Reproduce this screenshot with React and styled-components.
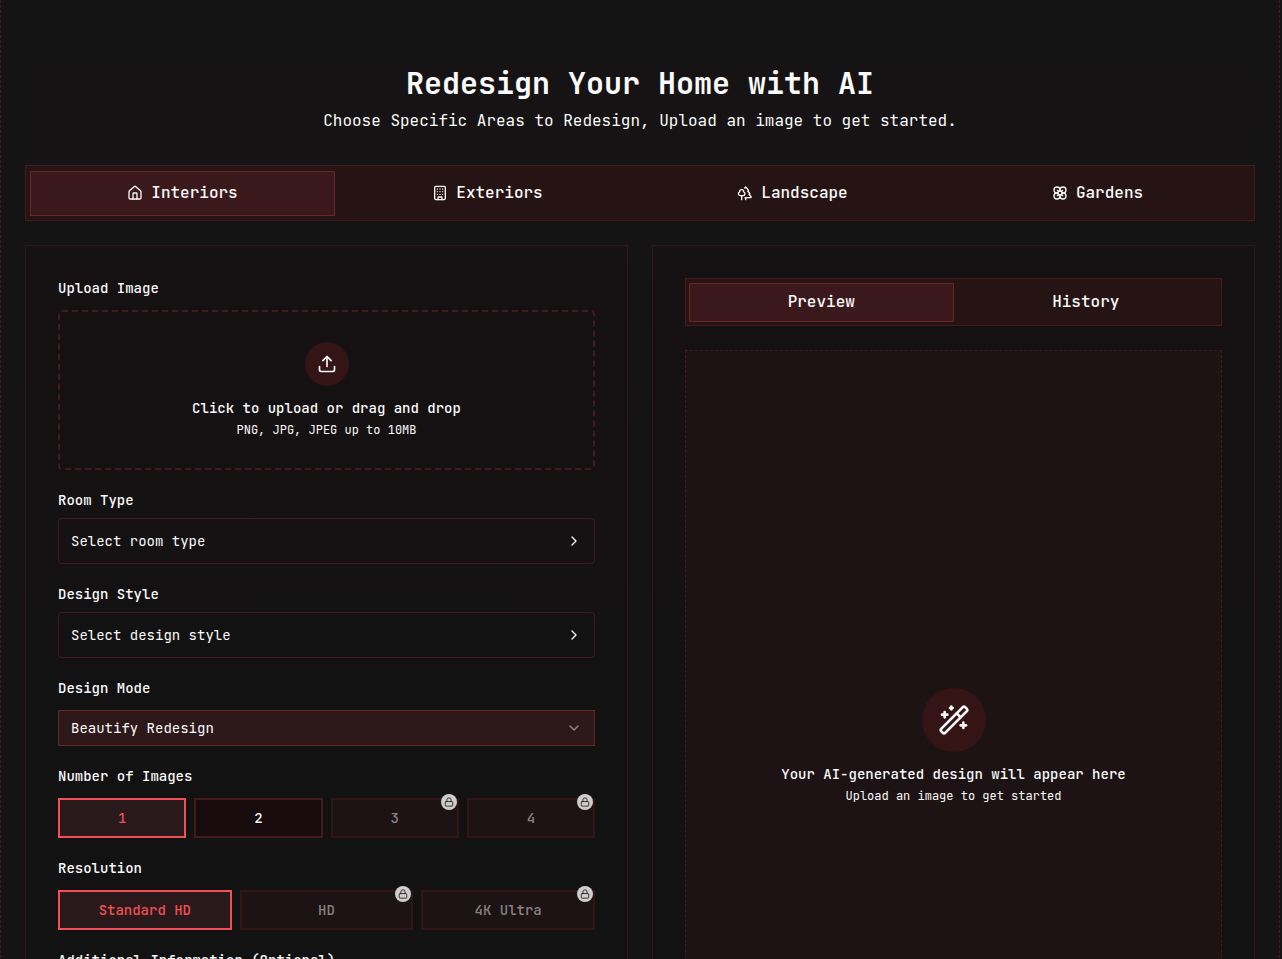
import React, { useState } from 'react';
import styled, { createGlobalStyle } from 'styled-components';
import {
  Building,
  ChevronDown,
  ChevronRight,
  Flower,
  House,
  Lock,
  Trees,
  Upload,
  WandSparkles,
} from 'lucide-react';

const GlobalStyle = createGlobalStyle`
  *, *::before, *::after {
    box-sizing: border-box;
  }

  body {
    margin: 0;
    background: #141414;
    color: #fafafa;
    font-family: 'JetBrains Mono', 'DejaVu Sans Mono', monospace;
    font-size: 14px;
    line-height: 20px;
    -webkit-font-smoothing: antialiased;
  }

  h1, p {
    margin: 0;
  }

  button, select, textarea {
    font: inherit;
    color: inherit;
    margin: 0;
  }

  button:not(:disabled), select {
    cursor: pointer;
  }
`;

const StyledPage = styled.main`
  min-height: 100vh;
  margin-right: 2px;
  padding: 65px 24px 48px;
  border: 1px dashed #451a1c;
  border-width: 0 1px;
`;

const StyledContent = styled.div`
  border-radius: 12px;
  background: linear-gradient(#161314, #141414 180px);
`;

const StyledHeader = styled.header`
  padding-bottom: 32px;
  text-align: center;
`;

const StyledTitle = styled.h1`
  font-size: 30px;
  font-weight: 700;
  line-height: 36px;
`;

const StyledSubtitle = styled.p`
  margin-top: 8px;
  font-size: 16px;
  line-height: 24px;
`;

const StyledTabs = styled.div`
  display: grid;
  grid-template-columns: repeat(${({ $columns }) => $columns}, 1fr);
  padding: ${({ $small }) => ($small ? '4px 3px 3px' : '5px 4px 4px')};
  border: 1px solid #451a1c;
  background-color: #261414;
`;

const StyledTab = styled.button`
  display: flex;
  align-items: center;
  justify-content: center;
  gap: 8px;
  height: ${({ $small }) => ($small ? '39px' : '45px')};
  padding: 0 12px 1px;
  font-size: 16px;
  font-weight: 500;
  border: 1px solid ${({ $active }) => ($active ? '#6b2428' : 'transparent')};
  background-color: ${({ $active }) => ($active ? '#3a181b' : 'transparent')};
`;

const StyledColumns = styled.div`
  display: grid;
  grid-template-columns: 1fr 1fr;
  gap: 24px;
  margin-top: 24px;
`;

const StyledPanel = styled.section`
  display: flex;
  flex-direction: column;
  gap: ${({ $gap }) => $gap}px;
  min-width: 0;
  padding: 32px;
  border: 1px solid #2d171a;
  background: linear-gradient(#161113, #131213 400px);
`;

const StyledField = styled.div`
  display: flex;
  flex-direction: column;
  gap: ${({ $gap }) => $gap || 12}px;
`;

const StyledLabel = styled.label`
  font-weight: 500;
`;

const StyledDropzone = styled.button`
  display: flex;
  flex-direction: column;
  align-items: center;
  padding: 30px;
  border: 2px dashed #451a1c;
  border-radius: 4px;
  background: none;
`;

const StyledIconCircle = styled.span`
  display: flex;
  align-items: center;
  justify-content: center;
  width: ${({ $size }) => $size}px;
  height: ${({ $size }) => $size}px;
  margin-bottom: 12px;
  border-radius: 50%;
  background-color: #351416;
`;

const StyledHint = styled.span`
  font-weight: 500;
`;

const StyledSmall = styled.span`
  margin-top: 4px;
  font-size: 12px;
  line-height: 16px;
`;

const StyledPicker = styled.button`
  display: flex;
  align-items: center;
  justify-content: space-between;
  height: 46px;
  padding: 0 12px;
  border: 1px solid #451a1c;
  border-radius: 4px;
  background: none;
`;

const StyledSelectWrapper = styled.div`
  display: grid;
  align-items: center;

  > * {
    grid-area: 1 / 1;
  }

  svg {
    justify-self: end;
    margin-right: 13px;
    opacity: 0.5;
    pointer-events: none;
  }
`;

const StyledSelect = styled.select`
  appearance: none;
  width: 100%;
  height: 36px;
  padding: 0 12px;
  border: 1px solid #6b2428;
  border-radius: 0;
  background-color: #2d181a;
`;

const StyledOptions = styled.div`
  display: grid;
  grid-template-columns: repeat(${({ $columns }) => $columns}, 1fr);
  gap: 8px;
`;

const optionColors = {
  active: { border: '#ef5053', background: '#29191b', text: '#ef5053' },
  idle: { border: '#451a1c', background: '#170b0d', text: '#fafafa' },
  locked: { border: '#311517', background: '#1d1314', text: '#888284' },
};

const StyledOption = styled.button`
  position: relative;
  height: 40px;
  padding: 0;
  font-weight: 500;
  border: 2px solid ${({ $state }) => optionColors[$state].border};
  background-color: ${({ $state }) => optionColors[$state].background};

  && {
    color: ${({ $state }) => optionColors[$state].text};
  }
`;

const StyledLock = styled.span`
  position: absolute;
  top: -6px;
  right: 0;
  display: flex;
  align-items: center;
  justify-content: center;
  width: 16px;
  height: 16px;
  border-radius: 50%;
  background-color: #d0cdce;
  color: #1d1314;
`;

const StyledTextarea = styled.textarea`
  width: 100%;
  height: 96px;
  padding: 12px;
  border: 1px solid #451a1c;
  border-radius: 4px;
  background: none;
  resize: vertical;
`;

const StyledPreview = styled.div`
  display: flex;
  flex: 1;
  flex-direction: column;
  align-items: center;
  justify-content: center;
  min-height: 792px;
  border: 1px dashed #451a1c;
  background-color: #1d1314;
`;

const areas = [
  { name: 'Interiors', Icon: House },
  { name: 'Exteriors', Icon: Building },
  { name: 'Landscape', Icon: Trees },
  { name: 'Gardens', Icon: Flower },
];

const imageCounts = [
  { name: '1' },
  { name: '2' },
  { name: '3', locked: true },
  { name: '4', locked: true },
];

const resolutions = [
  { name: 'Standard HD' },
  { name: 'HD', locked: true },
  { name: '4K Ultra', locked: true },
];

const getState = (item, selected) => {
  if (item.locked) return 'locked';
  return item.name === selected ? 'active' : 'idle';
};

const OptionGroup = ({ id, label, items, selected, onSelect }) => (
  <StyledField>
    <StyledLabel as="span" id={id}>
      {label}
    </StyledLabel>
    <StyledOptions role="group" aria-labelledby={id} $columns={items.length}>
      {items.map(item => (
        <StyledOption
          key={item.name}
          type="button"
          disabled={item.locked}
          aria-pressed={item.name === selected}
          $state={getState(item, selected)}
          onClick={() => onSelect(item.name)}
        >
          {item.name}
          {item.locked && (
            <StyledLock>
              <Lock size={10} />
            </StyledLock>
          )}
        </StyledOption>
      ))}
    </StyledOptions>
  </StyledField>
);

const App = () => {
  const [area, setArea] = useState('Interiors');
  const [view, setView] = useState('Preview');
  const [count, setCount] = useState('1');
  const [resolution, setResolution] = useState('Standard HD');

  return (
    <>
      <GlobalStyle />
      <StyledPage>
        <StyledContent>
          <StyledHeader>
            <StyledTitle>Redesign Your Home with AI</StyledTitle>
            <StyledSubtitle>
              Choose Specific Areas to Redesign, Upload an image to get started.
            </StyledSubtitle>
          </StyledHeader>

          <StyledTabs role="tablist" $columns={4}>
            {areas.map(({ name, Icon }) => (
              <StyledTab
                key={name}
                type="button"
                role="tab"
                aria-selected={area === name}
                $active={area === name}
                onClick={() => setArea(name)}
              >
                <Icon size={16} />
                {name}
              </StyledTab>
            ))}
          </StyledTabs>

          <StyledColumns>
            <StyledPanel $gap={20}>
              <StyledField>
                <StyledLabel htmlFor="upload">Upload Image</StyledLabel>
                <StyledDropzone id="upload" type="button">
                  <StyledIconCircle $size={44}>
                    <Upload size={20} />
                  </StyledIconCircle>
                  <StyledHint>Click to upload or drag and drop</StyledHint>
                  <StyledSmall>PNG, JPG, JPEG up to 10MB</StyledSmall>
                </StyledDropzone>
              </StyledField>

              <StyledField $gap={8}>
                <StyledLabel htmlFor="room">Room Type</StyledLabel>
                <StyledPicker id="room" type="button">
                  Select room type
                  <ChevronRight size={16} />
                </StyledPicker>
              </StyledField>

              <StyledField $gap={8}>
                <StyledLabel htmlFor="style">Design Style</StyledLabel>
                <StyledPicker id="style" type="button">
                  Select design style
                  <ChevronRight size={16} />
                </StyledPicker>
              </StyledField>

              <StyledField>
                <StyledLabel htmlFor="mode">Design Mode</StyledLabel>
                <StyledSelectWrapper>
                  <StyledSelect id="mode">
                    <option>Beautify Redesign</option>
                  </StyledSelect>
                  <ChevronDown size={16} />
                </StyledSelectWrapper>
              </StyledField>

              <OptionGroup
                id="count"
                label="Number of Images"
                items={imageCounts}
                selected={count}
                onSelect={setCount}
              />
              <OptionGroup
                id="resolution"
                label="Resolution"
                items={resolutions}
                selected={resolution}
                onSelect={setResolution}
              />

              <StyledField>
                <StyledLabel htmlFor="info">Additional Information (Optional)</StyledLabel>
                <StyledTextarea id="info" />
              </StyledField>
            </StyledPanel>

            <StyledPanel $gap={24}>
              <StyledTabs role="tablist" $columns={2} $small>
                {['Preview', 'History'].map(name => (
                  <StyledTab
                    key={name}
                    type="button"
                    role="tab"
                    aria-selected={view === name}
                    $active={view === name}
                    $small
                    onClick={() => setView(name)}
                  >
                    {name}
                  </StyledTab>
                ))}
              </StyledTabs>
              <StyledPreview>
                <StyledIconCircle $size={64}>
                  <WandSparkles size={32} />
                </StyledIconCircle>
                <StyledHint>Your AI-generated design will appear here</StyledHint>
                <StyledSmall>Upload an image to get started</StyledSmall>
              </StyledPreview>
            </StyledPanel>
          </StyledColumns>
        </StyledContent>
      </StyledPage>
    </>
  );
};

export default App;
